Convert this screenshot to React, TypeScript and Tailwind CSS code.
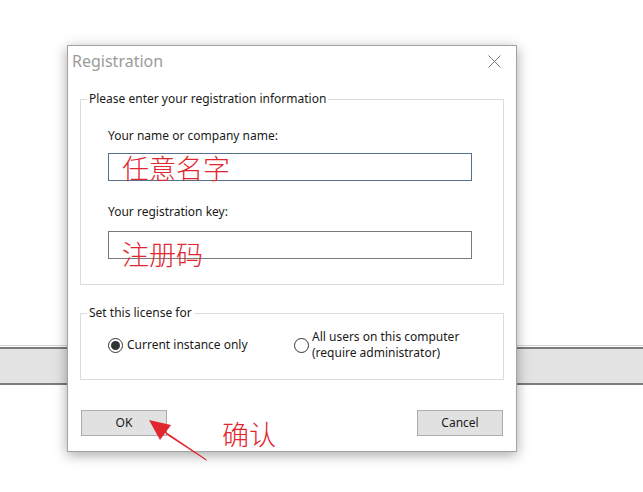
import React from 'react';

const ui = { fontFamily: '"Noto Sans", "Liberation Sans", sans-serif' };
const cjk = { fontFamily: '"Noto Sans CJK SC", "Noto Sans", sans-serif' };

function Group({ legend, className, children }: { legend: string; className: string; children: React.ReactNode }) {
  return (
    <div className={`relative mx-[12px] border border-[#dcdcdc] ${className}`}>
      <span className="absolute -top-[9px] left-[6px] bg-white px-[2px] text-[12px] leading-[16px] text-[#1a1a1a]">
        {legend}
      </span>
      {children}
    </div>
  );
}

function Radio({ checked }: { checked?: boolean }) {
  return (
    <span className="flex h-[15px] w-[15px] shrink-0 items-center justify-center rounded-full border border-[#333] bg-white">
      {checked && <span className="h-[9px] w-[9px] rounded-full bg-[#333]" />}
    </span>
  );
}

export default function App() {
  return (
    <div className="relative h-[492px] w-[643px] overflow-hidden bg-white" style={ui}>
      {/* window strip behind the dialog */}
      <div className="absolute left-0 right-0 top-[345px] h-[40px] border-t border-[#d4d4d4] bg-white pt-[1px]">
        <div className="h-[38px] border-y-2 border-[#7c7c7c] bg-[#e3e3e3]" />
      </div>

      {/* dialog */}
      <div className="absolute left-[67px] top-[45px] flex h-[407px] w-[450px] flex-col border border-[#a3a3a3] bg-white shadow-[0_3px_12px_rgba(0,0,0,0.35)]">
        <div className="flex h-[30px] items-center justify-between pl-[4px] pr-[15px]">
          <span className="text-[16px] text-[#9b9b9b]">Registration</span>
          <svg width="13" height="13" viewBox="0 0 13 13" className="mt-[1px]">
            <path d="M0.5 0.5 L12.5 12.5 M12.5 0.5 L0.5 12.5" stroke="#7a7a7a" strokeWidth="1" fill="none" />
          </svg>
        </div>

        <Group legend="Please enter your registration information" className="mt-[23px] h-[186px] pl-[27px] pr-[31px] pt-[28px]">
          <div className="text-[12px] leading-[16px] text-[#1a1a1a]">Your name or company name:</div>
          <div className="relative mt-[9px] h-[28px] border border-[#56718d]">
            <span className="absolute left-[13px] top-[0px] whitespace-nowrap text-[27px] font-light leading-[27px] text-[#e0262e]" style={cjk}>
              任意名字
            </span>
          </div>
          <div className="mt-[23px] text-[12px] leading-[16px] text-[#1a1a1a]">Your registration key:</div>
          <div className="relative mt-[11px] h-[28px] border border-[#7a7a7a]">
            <span className="absolute left-[13px] top-[8px] whitespace-nowrap text-[27px] font-light leading-[27px] text-[#e0262e]" style={cjk}>
              注册码
            </span>
          </div>
        </Group>

        <Group legend="Set this license for" className="mt-[28px] h-[67px]">
          <div className="flex items-center pt-[15px] text-[12px] leading-[16px] text-[#1a1a1a]">
            <div className="ml-[27px] flex w-[186px] items-center gap-[4px]">
              <Radio checked />
              <span>Current instance only</span>
            </div>
            <div className="flex items-center gap-[3px]">
              <Radio />
              <span className="leading-[16px]">
                All users on this computer
                <br />
                (require administrator)
              </span>
            </div>
          </div>
        </Group>

        <div className="mt-[30px] flex justify-between pl-[13px] pr-[13px]">
          <button className="h-[26px] w-[86px] border border-[#adadad] bg-[#e1e1e1] text-[12px] text-[#1a1a1a]">OK</button>
          <button className="h-[26px] w-[86px] border border-[#adadad] bg-[#e1e1e1] text-[12px] text-[#1a1a1a]">Cancel</button>
        </div>
      </div>

      {/* annotation */}
      <span className="absolute left-[222px] top-[420px] text-[27px] font-light leading-[27px] text-[#e0262e]" style={cjk}>
        确认
      </span>
      <svg className="absolute left-0 top-0" width="643" height="492" viewBox="0 0 643 492">
        <polygon points="149,420 160,440 171,425" fill="#e0262e" />
        <polygon points="163,430 167,435 207,461 206,459" fill="#e0262e" />
      </svg>
    </div>
  );
}
